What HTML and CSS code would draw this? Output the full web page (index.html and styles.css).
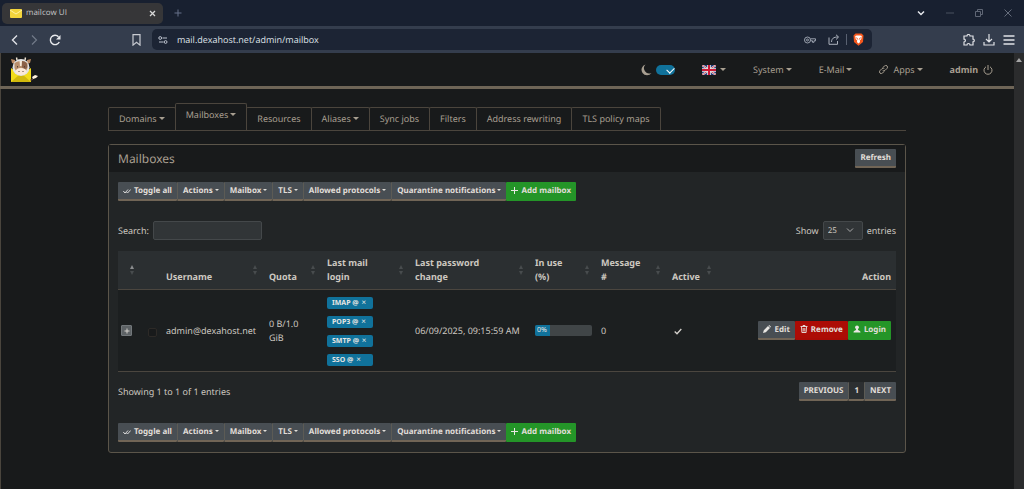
FILE: index.html
```html
<!DOCTYPE html>
<html lang="en">
<head>
    <meta charset="UTF-8">
    <meta name="viewport" content="width=device-width, initial-scale=1.0">
    <title>mailcow UI</title>
    <link rel="stylesheet" href="styles.css">
</head>
<body>
    <!-- browser window -->
    <div class="tabstrip">
        <div class="browser-tab">
            <svg class="favicon" width="12" height="9" viewBox="0 0 12 9"><rect width="12" height="9" rx="1" fill="#f3d53c"/><path d="M0 1l6 4 6-4" fill="none" stroke="#fff1a0"/></svg>
            <span>mailcow UI</span>
            <button class="plain" aria-label="Close tab"><svg width="7" height="7" viewBox="0 0 7 7"><path d="M1 1l5 5M6 1L1 6" stroke="#d8d8d8" stroke-width="1.3"/></svg></button>
        </div>
        <button class="plain" aria-label="New tab"><svg width="8" height="8" viewBox="0 0 8 8"><path d="M4 .5v7M.5 4h7" stroke="#66708a"/></svg></button>
        <div class="window-buttons">
            <button class="plain" aria-label="Search tabs"><svg width="8" height="8" viewBox="0 0 8 8"><path d="M1 2.5l3 3 3-3" fill="none" stroke="#e6e8ec" stroke-width="1.5"/></svg></button>
            <button class="plain" aria-label="Minimize"><svg width="8" height="8" viewBox="0 0 8 8"><path d="M0 4h8" stroke="#49505e"/></svg></button>
            <button class="plain" aria-label="Restore"><svg width="8" height="8" viewBox="0 0 8 8"><path d="M.5 2.5h5v5h-5zM2.500 2.500v-2h5v5h-2" fill="none" stroke="#5f6675"/></svg></button>
            <button class="plain" aria-label="Close"><svg width="8" height="8" viewBox="0 0 8 8"><path d="M.5.5l7 7M7.500.5l-7 7" stroke="#656c7b"/></svg></button>
        </div>
    </div>
    <div class="toolbar">
        <div class="nav-buttons">
            <button class="plain" aria-label="Back"><svg width="10" height="12" viewBox="0 0 10 12"><path d="M8 1.500L3.500 6 8 10.500" fill="none" stroke="#e0e2e6" stroke-width="1.400"/></svg></button>
            <button class="plain" aria-label="Forward"><svg width="10" height="12" viewBox="0 0 10 12"><path d="M3 1.500L7.500 6 3 10.500" fill="none" stroke="#727a88" stroke-width="1.200"/></svg></button>
            <button class="plain" aria-label="Reload"><svg width="12" height="12" viewBox="0 0 12 12"><path d="M10.300 8A4.700 4.700 0 1 1 9.500 2.700" fill="none" stroke="#e8eaed" stroke-width="1.400"/><path d="M11.500 1v4.500H7z" fill="#e8eaed"/></svg></button>
        </div>
        <button class="plain" aria-label="Bookmark"><svg width="9" height="12" viewBox="0 0 9 12"><path d="M1 .7h7v10.400L4.500 8.300 1 11.100z" fill="none" stroke="#c9ccd2" stroke-width="1.200"/></svg></button>
        <div class="address">
            <svg width="10" height="8" viewBox="0 0 10 8" fill="none" stroke="#bcc2cd"><circle cx="2.200" cy="2" r="1.400"/><path d="M4.500 2H9M1 6h4.500"/><circle cx="7.600" cy="6" r="1.400"/></svg>
            <input type="text" aria-label="Address" value="mail.dexahost.net/admin/mailbox">
            <svg width="12" height="8" viewBox="0 0 12 8" fill="none" stroke="#9aa1ae"><circle cx="3.500" cy="4" r="3"/><circle cx="3.500" cy="4" r="1"/><path d="M6.500 2.800h5v2H10v1.500H8.500V4.800h-2"/></svg>
            <svg class="share" width="12" height="11" viewBox="0 0 12 11" fill="none" stroke="#aab0bb"><path d="M1 3.500v6.800h8.500V7M3.500 8c.2-3.500 2-5 6.500-5M8 .8L10.600 3 8 5.500"/></svg>
            <span class="divider"></span>
            <svg width="11" height="13" viewBox="0 0 11 13"><path d="M2.500.5h6l2 2-.5 6.500-4.500 3.700L1 9 .5 2.500z" fill="#f4571d"/><path d="M2.200 3l1.600-.6h3.400L8.800 3 8.300 6 6.800 7.500l.3 1.500-1.600 1.400L3.900 9l.3-1.500L2.700 6z" fill="#fff"/><path d="M3.600 4.500l1.100 2M7.400 4.500l-1.100 2" stroke="#f4571d"/></svg>
        </div>
        <div class="extras">
            <button class="plain" aria-label="Extensions"><svg width="12" height="12" viewBox="0 0 12 12"><path d="M1 2h3a1.500 1.500 0 0 1 3 0h3v3.200a1.300 1.300 0 0 1 0 2.600V11H7a1.500 1.500 0 0 0-3 0H1V8a1.400 1.400 0 0 0 0-2.800z" fill="none" stroke="#e0e2e6" stroke-width="1.200"/></svg></button>
            <button class="plain" aria-label="Downloads"><svg width="12" height="12" viewBox="0 0 12 12"><path d="M6 0v8M3 5l3 3 3-3M1 8v3h10V8" fill="none" stroke="#e0e2e6" stroke-width="1.200"/></svg></button>
            <button class="plain" aria-label="Menu"><svg width="12" height="12" viewBox="0 0 12 12"><path d="M.5 2h11M.5 6h11M.5 10h11" stroke="#e0e2e6" stroke-width="1.300"/></svg></button>
        </div>
    </div>

    <div class="viewport">
        <div class="page">
            <nav class="navbar">
                <a href="#" class="logo" aria-label="mailcow">
                    <svg width="28" height="26" viewBox="0 0 28 26">
                        <path d="M1 11l10 7 10-7v14H1z" fill="#f2dc1b"/>
                        <path d="M1 25l9-8h2l9 8z" fill="#d1b90d"/>
                        <path d="M20 23c3 0 3-1 4-3" fill="none" stroke="#7b5a43"/>
                        <path d="M22 20l3-2 3 1-2 2-3 1z" fill="#fff2df"/>
                        <path d="M7 3L6.500 .5M15 3l.5-2.500" stroke="#f5ead8" stroke-width="1.400"/>
                        <path d="M5 3L1 2l1 4 3 1zM17 3l4-1-1 4-3 1z" fill="#ba8963"/>
                        <circle cx="11" cy="10.500" r="8.500" fill="#e3e3e2"/>
                        <path d="M4.500 11V6.500C6 3 16 3 17.500 6.500V11l-2 4h-9z" fill="#b98f6d"/>
                        <path d="M9.500 4h2.500l-.5 5h-1.500z" fill="#f4e8d9"/>
                        <path d="M12 4c4 0 6 3 5 7l-3 2-2-3z" fill="#8b6148"/>
                        <ellipse cx="11" cy="14.500" rx="5.500" ry="3.500" fill="#fbe9d8"/>
                        <path d="M7.500 9v1.500M14.500 9v1.500M9 14v1M13 14v1" stroke="#5b4236"/>
                    </svg>
                </a>
                <label class="theme">
                    <svg width="11" height="12" viewBox="0 0 11 12"><path d="M4.500.5A5.500 5.500 0 1 0 10.500 9 5.300 5.300 0 0 1 4.500.5z" fill="#a89f91"/></svg>
                    <input type="checkbox" checked aria-label="Dark mode">
                </label>
                <a href="#" class="caret lang" aria-label="Language"><svg width="14" height="10" viewBox="0 0 14 10"><path d="M0 0h14v10H0z" fill="#273a7d"/><path d="M0 0l14 10M14 0L0 10" stroke="#e8e6e3" stroke-width="2"/><path d="M0 0l14 10M14 0L0 10" stroke="#c31f38" stroke-width=".7"/><path d="M7 0v10M0 5h14" stroke="#e8e6e3" stroke-width="3.600"/><path d="M7 0v10M0 5h14" stroke="#cb1735" stroke-width="2"/></svg></a>
                <a href="#" class="caret">System</a>
                <a href="#" class="caret">E-Mail</a>
                <a href="#" class="caret"><svg class="link" width="9" height="9" viewBox="0 0 9 9" fill="none" stroke="#a89f91"><path d="M4 2.500l1.500-1.600a1.600 1.600 0 0 1 2.500 2.500L6 5.400a1.600 1.600 0 0 1-2.300 0"/><path d="M5 6.500L3.500 8.100A1.600 1.600 0 0 1 1 5.600l2-2a1.600 1.600 0 0 1 2.300 0"/></svg>Apps</a>
                <a href="#" class="user">admin <svg width="10" height="10" viewBox="0 0 10 10" fill="none" stroke="#a89f91"><path d="M5 0v5M3 1.800a4 4 0 1 0 4 0"/></svg></a>
            </nav>

            <main class="container">
                <div class="tabs">
                    <a href="#" class="caret">Domains</a>
                    <a href="#" class="caret active">Mailboxes</a>
                    <a href="#">Resources</a>
                    <a href="#" class="caret">Aliases</a>
                    <a href="#">Sync jobs</a>
                    <a href="#">Filters</a>
                    <a href="#">Address rewriting</a>
                    <a href="#">TLS policy maps</a>
                </div>

                <section class="card">
                    <div class="card-header">
                        <h1>Mailboxes</h1>
                        <button class="btn">Refresh</button>
                    </div>
                    <div class="card-body">
                        <div class="btn-group">
                            <button class="btn"><svg width="8" height="6" viewBox="0 0 8 6"><path d="M.3 3l1.700 2 3-3.500M3.500 4l1 1L7.700 1.500" fill="none" stroke="#ddd"/></svg>Toggle all</button>
                            <button class="btn caret">Actions</button>
                            <button class="btn caret">Mailbox</button>
                            <button class="btn caret">TLS</button>
                            <button class="btn caret">Allowed protocols</button>
                            <button class="btn caret">Quarantine notifications</button>
                            <button class="btn green"><svg width="7" height="7" viewBox="0 0 7 7"><path d="M3.500 0v7M0 3.500h7" stroke="#e8e6e3"/></svg>Add mailbox</button>
                        </div>

                        <div class="filters">
                            <label>Search:<input type="text" class="search"></label>
                            <label>Show<select><option>25</option></select>entries</label>
                        </div>

                        <table>
                            <colgroup>
                                <col class="c-expand"><col class="c-check"><col class="c-user"><col class="c-quota"><col class="c-login"><col class="c-pass"><col class="c-use"><col class="c-msg"><col class="c-active"><col>
                            </colgroup>
                            <thead>
                                <tr>
                                    <th class="sort asc"></th>
                                    <th></th>
                                    <th class="sort">Username</th>
                                    <th class="sort">Quota</th>
                                    <th class="sort">Last mail<br>login</th>
                                    <th class="sort">Last password<br>change</th>
                                    <th class="sort">In use<br>(%)</th>
                                    <th class="sort">Message<br>#</th>
                                    <th class="sort">Active</th>
                                    <th class="right">Action</th>
                                </tr>
                            </thead>
                            <tbody>
                                <tr>
                                    <td class="expand"><button aria-label="Expand row"><svg width="6" height="6" viewBox="0 0 6 6"><path d="M3 .5v5M.5 3h5" stroke="#d5d2cd"/></svg></button></td>
                                    <td><input type="checkbox" class="tick" aria-label="Select admin@dexahost.net"></td>
                                    <td>admin@dexahost.net</td>
                                    <td>0 B/1.0<br>GiB</td>
                                    <td>
                                        <div class="badges">
                                            <span class="badge">IMAP @ <small>×</small></span>
                                            <span class="badge">POP3 @ <small>×</small></span>
                                            <span class="badge">SMTP @ <small>×</small></span>
                                            <span class="badge">SSO @ <small>×</small></span>
                                        </div>
                                    </td>
                                    <td>06/09/2025, 09:15:59 AM</td>
                                    <td class="usage"><div class="progress"><div class="bar">0%</div></div></td>
                                    <td>0</td>
                                    <td><svg class="active-mark" width="8" height="7" viewBox="0 0 8 7"><path d="M.7 3.500l2.300 2.300L7.300 1" fill="none" stroke="#d5d2cd" stroke-width="1.300"/></svg></td>
                                    <td class="right">
                                        <div class="btn-group actions">
                                            <button class="btn"><svg width="8" height="8" viewBox="0 0 8 8"><path d="M0 8l.8-2.800L5 1l2 2-4.200 4.200zM5.500.5L6.200 0 8 1.800l-.5.7z" fill="#e8e6e3"/></svg>Edit</button>
                                            <button class="btn red"><svg width="8" height="8" viewBox="0 0 8 8"><path d="M.5 1.500h7M3 1.300V.5h2v.8M1.500 2l.4 5.500h4.200L6.500 2M3.200 3v3.500M4.800 3v3.500" fill="none" stroke="#e8e6e3" stroke-width=".9"/></svg>Remove</button>
                                            <button class="btn green"><svg width="8" height="8" viewBox="0 0 8 8"><circle cx="4" cy="2.300" r="1.900" fill="#e8e6e3"/><path d="M.5 7.500c0-1.500 1-2 2.500-2.500V4h2v1c1.500.5 2.500 1 2.500 2.500z" fill="#e8e6e3"/></svg>Login</button>
                                        </div>
                                    </td>
                                </tr>
                            </tbody>
                        </table>

                        <div class="table-footer">
                            <span>Showing 1 to 1 of 1 entries</span>
                            <div class="btn-group pager">
                                <button class="btn">PREVIOUS</button>
                                <button class="btn current">1</button>
                                <button class="btn">NEXT</button>
                            </div>
                        </div>

                        <div class="btn-group">
                            <button class="btn"><svg width="8" height="6" viewBox="0 0 8 6"><path d="M.3 3l1.700 2 3-3.500M3.500 4l1 1L7.700 1.500" fill="none" stroke="#ddd"/></svg>Toggle all</button>
                            <button class="btn caret">Actions</button>
                            <button class="btn caret">Mailbox</button>
                            <button class="btn caret">TLS</button>
                            <button class="btn caret">Allowed protocols</button>
                            <button class="btn caret">Quarantine notifications</button>
                            <button class="btn green"><svg width="7" height="7" viewBox="0 0 7 7"><path d="M3.500 0v7M0 3.500h7" stroke="#e8e6e3"/></svg>Add mailbox</button>
                        </div>
                    </div>
                </section>
            </main>
        </div>
        <div class="scrollbar"></div>
    </div>
</body>
</html>
```
FILE: styles.css
```css
* {
    box-sizing: border-box;
}
body {
    display: flex;
    flex-direction: column;
    min-height: 100vh;
    margin: 0;
    background: #181a1b;
    color: #cdc8c0;
    font: 9px/14px "Noto Sans", sans-serif;
    text-rendering: geometricPrecision;
}
a {
    color: #a89f91;
    text-decoration: none;
}
button, input, select {
    font: inherit;
    color: inherit;
    text-rendering: inherit;
}
svg {
    flex: none;
}
.plain {
    display: flex;
    padding: 0;
    border: 0;
    background: none;
}

/* browser window */
.tabstrip, .toolbar {
    font-family: "Open Sans", sans-serif;
}
.tabstrip {
    display: flex;
    align-items: center;
    gap: 11px;
    height: 26px;
    padding: 0 12px 0 2px;
    background: #182030;
}
.browser-tab {
    display: flex;
    align-items: center;
    gap: 4px;
    width: 161px;
    height: 21px;
    padding: 0 7px 0 8px;
    border-radius: 5px;
    background: #363638;
    color: #c5c5c7;
    font-size: 8px;
}
.browser-tab .plain {
    margin-left: auto;
}
.window-buttons {
    display: flex;
    gap: 21px;
    margin-left: auto;
}
.toolbar {
    display: flex;
    align-items: center;
    height: 27px;
    padding: 0 9px;
    background: #343d4d;
}
.nav-buttons {
    display: flex;
    gap: 10px;
    margin-right: 71px;
}
.address {
    display: flex;
    align-items: center;
    gap: 9px;
    width: 720px;
    height: 21px;
    margin-left: 11px;
    padding: 0 8px 0 6px;
    border-radius: 5px;
    background: #1c2434;
    color: #dfe2e8;
}
.address input {
    flex: 1;
    min-width: 0;
    padding: 0;
    border: 0;
    background: none;
}
.share {
    margin-left: 3px;
}
.divider {
    width: 1px;
    height: 11px;
    margin: 0 -3px;
    background: #596171;
}
.extras {
    display: flex;
    gap: 8px;
    margin-left: auto;
}

/* page */
.viewport {
    display: flex;
    flex: 1;
}
.page {
    flex: 1;
    box-shadow: inset 1px 0 #4a453d;
}
.scrollbar {
    width: 10px;
    padding-top: 5px;
    background: #2b2c2d;
}
.scrollbar::before {
    content: "";
    display: block;
    width: 0;
    margin: 0 auto;
    border: 3px solid transparent;
    border-top: 0;
    border-bottom: 4px solid #a6a6a6;
}
.caret::after {
    content: "";
    display: inline-block;
    margin-left: 2px;
    vertical-align: 2px;
    border: 3px solid transparent;
    border-top-color: currentColor;
    border-bottom: 0;
}
.navbar {
    display: flex;
    align-items: center;
    gap: 27px;
    height: 36px;
    padding: 0 21px 0 10px;
    border-bottom: 3px solid #6e6557;
}
.logo {
    display: flex;
    margin-right: auto;
}
.theme {
    display: flex;
    align-items: center;
    gap: 4px;
}
.theme input {
    appearance: none;
    width: 19px;
    height: 10px;
    margin: 0;
    border-radius: 5px;
    background: #10729b;
}
.theme input::after {
    content: "";
    display: block;
    width: 6px;
    height: 4px;
    margin: 2px 0 0 11px;
    border: solid #fff;
    border-width: 0 0 1px 1px;
    transform: rotate(-45deg);
}
.lang {
    display: flex;
    align-items: center;
    gap: 2px;
}
.link {
    margin-right: 5px;
    vertical-align: -1px;
}
.user {
    display: flex;
    align-items: center;
    gap: 5px;
    font-weight: bold;
}
.container {
    max-width: 798px;
    margin: 0 auto;
    padding: 14px 0 36px;
}
.tabs {
    display: flex;
    align-items: flex-end;
    margin-bottom: 13px;
    border-bottom: 1px solid #4b453d;
}
.tabs a {
    padding: 4px 10px;
    border: 1px solid #4b453d;
    border-bottom: 0;
    border-radius: 2px 2px 0 0;
}
.tabs a + a {
    margin-left: -1px;
}
.tabs .active {
    padding-bottom: 8px;
}
.card {
    border: 1px solid #5b554a;
    border-radius: 3px;
    background: #222526;
}
.card-header {
    display: flex;
    align-items: center;
    justify-content: space-between;
    height: 27px;
    padding: 0 9px;
    background: #181a1b;
}
.card-header h1 {
    margin: 0;
    color: #a89f91;
    font-size: 12px;
    font-weight: normal;
}
.card-body {
    padding: 10px 9px;
}

/* buttons */
.btn-group {
    display: flex;
}
.btn {
    padding: 3px 5px 2px;
    border: 0;
    border-bottom: 2px solid #716556;
    border-radius: 1px;
    background: #484e53;
    color: #e0ddd8;
    font-size: 8px;
    font-weight: bold;
    line-height: 12px;
    white-space: nowrap;
}
.btn svg {
    margin-right: 3px;
    vertical-align: -1px;
}
.btn-group .btn + .btn {
    border-left: 1px solid #5c5b55;
}
.btn.caret::after {
    border-width: 2px 2px 0;
}
.btn-group .green {
    border-color: #249528;
    background: #249528;
}
.btn-group .btn.green, .btn-group .btn.red {
    border-left: 0;
}
.btn-group .red {
    border-color: #a90b05;
    background: #ac0c05;
}
.actions {
    justify-content: flex-end;
}
.btn.current {
    background: #2c2f31;
}

/* table */
.filters {
    display: flex;
    justify-content: space-between;
    margin: 20px 0 11px;
}
.filters label {
    display: flex;
    align-items: center;
    gap: 4px;
}
.search, select {
    height: 19px;
    border: 1px solid #44484a;
    border-radius: 2px;
    background: #313537;
}
.search {
    width: 109px;
    padding: 0 4px;
}
select {
    appearance: none;
    width: 40px;
    padding: 0 4px;
    background: #313537 url("data:image/svg+xml,%3Csvg xmlns='http://www.w3.org/2000/svg' width='8' height='5'%3E%3Cpath d='M1 .5l3 3 3-3' fill='none' stroke='%23aaa'/%3E%3C/svg%3E") no-repeat right 8px center;
    font-size: 8px;
}
table {
    width: 100%;
    border-collapse: collapse;
    table-layout: fixed;
}
.c-expand { width: 27px; }
.c-check { width: 16px; }
.c-user { width: 103px; }
.c-quota { width: 58px; }
.c-login { width: 88px; }
.c-pass { width: 120px; }
.c-use { width: 66px; }
.c-msg { width: 71px; }
.c-active { width: 51px; }
th, td {
    padding: 5px;
    border-bottom: 1px solid #4b463f;
    text-align: left;
    white-space: nowrap;
}
th {
    position: relative;
    background: #2b2f31;
    vertical-align: bottom;
}
td {
    background: #1c1f20;
}
.sort::before, .sort::after {
    content: "";
    position: absolute;
    top: 14px;
    right: 7px;
    border: 2px solid transparent;
    border-top: 0;
    border-bottom: 4px solid #484c4e;
}
.sort::after {
    top: 20px;
    border-top: 4px solid #484c4e;
    border-bottom: 0;
}
.sort.asc::before, .sort.asc::after {
    right: 11px;
}
.sort.asc::before {
    border-bottom-color: #8b8d8e;
}
.right {
    text-align: right;
}
.expand {
    padding: 3px;
}
.expand button {
    display: flex;
    align-items: center;
    justify-content: center;
    width: 11px;
    height: 11px;
    padding: 0;
    border: 1px solid #72777a;
    border-radius: 1px;
    background: #5d6265;
}
.tick {
    appearance: none;
    display: block;
    width: 9px;
    height: 9px;
    margin: 4px 0 0 -2px;
    border: 1px solid #2d2a27;
    border-radius: 2px;
    background: #181a1b;
}
.badges {
    display: grid;
    gap: 7px;
    padding: 2px 0 0;
}
.badge {
    width: 46px;
    height: 12px;
    padding: 0 5px;
    border-radius: 2px;
    background: #10729b;
    color: #e8e6e3;
    font-size: 7px;
    font-weight: bold;
    line-height: 12px;
}
.badge small {
    margin-left: 1px;
    font-size: 8px;
    font-weight: normal;
}
.usage {
    padding-right: 4px;
}
.progress {
    height: 11px;
    border-radius: 2px;
    background: #404547;
    overflow: hidden;
}
.bar {
    width: 15px;
    padding-left: 2px;
    background: #10729b;
    color: #e8e6e3;
    font-size: 7px;
    line-height: 11px;
}
.active-mark {
    margin-left: 2px;
    vertical-align: middle;
}
.table-footer {
    display: flex;
    align-items: center;
    justify-content: space-between;
    margin: 10px 0 22px;
}
```
